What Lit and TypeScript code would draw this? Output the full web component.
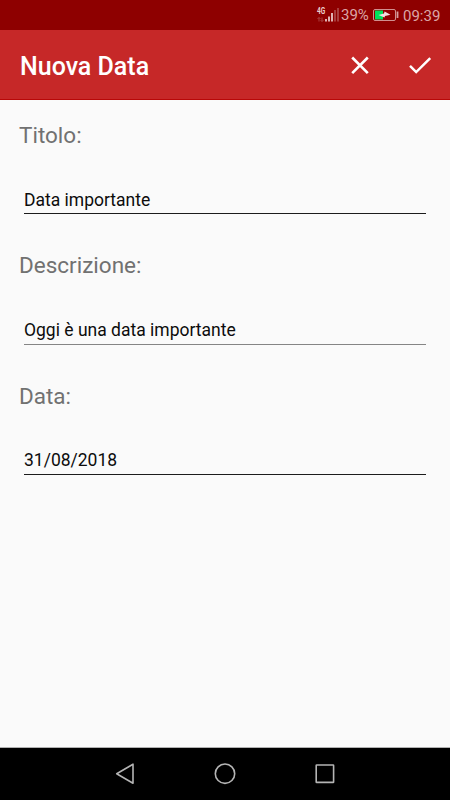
import { LitElement, html, svg, css } from "lit";
import { customElement, property } from "lit/decorators.js";

@customElement("status-bar")
class StatusBar extends LitElement {
  static styles = css`
    :host { display: flex; height: 30px; box-sizing: border-box; background: #8e0000; color: #dba6a6; justify-content: flex-end; padding-right: 10px; font-size: 15px; line-height: 30px; }
    .signal { width: 24px; height: 30px; margin-right: 1px; }
    .battery { width: 27px; height: 30px; margin: 0 4px 0 3px; }
    .net { font: 700 8.5px "Roboto", sans-serif; fill: #ecd0d0; }
    .pct { width: 28px; white-space: nowrap; }
    .time { width: 37px; white-space: nowrap; line-height: 32px; }
  `;
  render() {
    return html`
      <svg class="signal" viewBox="0 0 24 30">
        <text class="net" x="1" y="14.2" textLength="8.2" lengthAdjust="spacingAndGlyphs">4G</text>
        <path d="M3 21.5V17.5M1.5 19L3 17.5L4.5 19M6 17.5V21.5M4.5 20L6 21.5L7.5 20" fill="none" stroke="#a84040" stroke-width="1" />
        <path d="M9 19h2v2.5h-2zM12 16.5h2v5h-2zM15 13h2v8.5h-2z" fill="#dfb2b2" />
        <path d="M18 10h2v11.5h-2zM21 8h2v13.5h-2z" fill="#a83c3c" />
      </svg>
      <span class="pct">39%</span>
      <svg class="battery" viewBox="0 0 27 30">
        <rect x="1.5" y="9.5" width="22" height="11" rx="1.5" fill="none" stroke="#d09090" />
        <rect x="3" y="10.5" width="8" height="9" fill="#00e25b" />
        <rect x="24.6" y="11.5" width="1.8" height="6.5" fill="#d69e9e" />
        <path d="M6.5 15L12 13.6L12.6 11.6L18.5 14.8L13 15.9L12.5 17.6z" fill="#f4dede" />
      </svg>
      <span class="time">09:39</span>
    `;
  }
}

@customElement("app-header")
class AppHeader extends LitElement {
  static styles = css`
    :host { display: flex; height: 70px; box-sizing: border-box; background: #c62828; border-bottom: 1px solid #b80808; align-items: center; padding-left: 20px; }
    .title { flex: 1; margin: 5px 0 0; color: #fff; font-size: 25px; font-weight: 500; line-height: 30px; white-space: nowrap; }
    .action { width: 60px; height: 60px; }
  `;
  render() {
    return html`
      <h1 class="title">Nuova Data</h1>
      <svg class="action" viewBox="0 0 60 60"><path d="M22.2 22.5L37.8 38.1M37.8 22.5L22.2 38.1" fill="none" stroke="#fff" stroke-width="2.6" /></svg>
      <svg class="action" viewBox="0 0 60 60"><path d="M20 30.9L26.2 37.1L40.2 23.1" fill="none" stroke="#fff" stroke-width="2.5" /></svg>
    `;
  }
}

@customElement("form-field")
class FormField extends LitElement {
  @property() label = "";
  @property() value = "";
  static styles = css`
    :host { display: block; height: 130.5px; }
    .label { margin-left: 19px; padding-top: 20px; color: #717171; font-size: 22.5px; line-height: 30px; }
    .value { margin: 36px 24px 0; height: 27px; color: #0c0c0c; font-size: 17.5px; line-height: 27px; border-bottom: 1px solid #1c1c1c; }
    :host(:first-of-type) .value { line-height: 28px; }
    :host(:nth-of-type(2)) .label { line-height: 29px; padding-bottom: 1px; }
    :host([soft]) .value { border-bottom-color: #858585; }
  `;
  render() {
    return html`<div class="label">${this.label}</div><div class="value">${this.value}</div>`;
  }
}

@customElement("nav-bar")
class NavBar extends LitElement {
  static styles = css`
    :host { display: flex; height: 53px; box-sizing: border-box; justify-content: center; background: #000; border-top: 1px solid #b0b0b0; }
    .key { width: 100px; height: 52px; }
  `;
  key(shape: unknown) {
    return html`<svg class="key" viewBox="0 0 100 52" fill="none" stroke="#b4b4b4" stroke-width="1.6" stroke-linejoin="round">${shape}</svg>`;
  }
  render() {
    return html`
      ${this.key(svg`<path d="M58 16.2V35.2L41.7 25.7Z" />`)}
      ${this.key(svg`<circle cx="50" cy="25.7" r="9.7" />`)}
      ${this.key(svg`<rect x="41.2" y="17" width="17.4" height="17.4" rx="0.5" />`)}
    `;
  }
}

@customElement("app-root")
class AppRoot extends LitElement {
  static styles = css`
    :host { display: flex; flex-direction: column; width: 450px; height: 800px; overflow: hidden; background: #fafafa; font-family: "Roboto", sans-serif; }
    .form { flex: 1; }
  `;
  render() {
    return html`
      <status-bar></status-bar>
      <app-header></app-header>
      <main class="form">
        <form-field label="Titolo:" value="Data importante"></form-field>
        <form-field soft label="Descrizione:" value="Oggi è una data importante"></form-field>
        <form-field label="Data:" value="31/08/2018"></form-field>
      </main>
      <nav-bar></nav-bar>
    `;
  }
}
